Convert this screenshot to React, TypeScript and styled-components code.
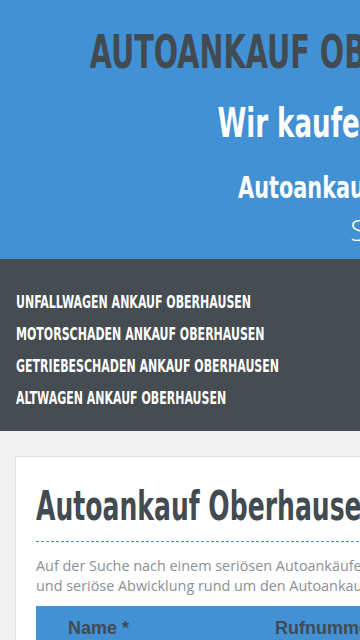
import styled, { createGlobalStyle } from "styled-components";

const GlobalStyle = createGlobalStyle`
  * {
    box-sizing: border-box;
  }

  html,
  body {
    margin: 0;
    padding: 0;
    background-color: #f1f1f1;
  }

  body {
    font-family: "Open Sans", "Liberation Sans", sans-serif;
  }
`;

const Page = styled.div`
  width: 770px;
  background-color: #f1f1f1;
  padding-bottom: 40px;
`;

const Header = styled.header`
  display: flex;
  flex-direction: column;
  align-items: center;

  height: 259px;
  padding-top: 22px;

  text-align: center;
  background-color: #4291d5;
`;

// schmale Überschrift-Schrift (Oswald-Ersatz)
const Narrow = styled.span<{ $scale: number; $origin?: string }>`
  display: inline-block;
  white-space: nowrap;

  font-family: "Liberation Sans Narrow", "DejaVu Sans Condensed", sans-serif;
  font-weight: 700;

  transform: scaleX(${({ $scale }) => $scale});
  transform-origin: ${({ $origin }) => $origin ?? "center"};
`;

const SiteTitle = styled.h1`
  margin: 0;
  color: #434b52;
  font-size: 46px;
  line-height: 56px;
  font-weight: 700;
`;

const Slogan = styled.h2`
  margin: 18px 0 0;
  color: #ffffff;
  font-size: 40px;
  line-height: 48px;
  font-weight: 700;
`;

const SubSlogan = styled.h3`
  margin: 20px 0 0;
  color: #ffffff;
  font-size: 31px;
  line-height: 38px;
  font-weight: 700;
`;

const Claim = styled.p`
  margin: 6px 0 0;
  color: #ffffff;
  font-family: "Open Sans", sans-serif;
  font-size: 30px;
  font-weight: 300;
  line-height: 36px;
  white-space: nowrap;
`;

const Nav = styled.nav`
  height: 172px;
  padding: 26px 16px 0;
  background-color: #454c52;
`;

const NavList = styled.ul`
  display: flex;
  flex-direction: column;
  margin: 0;
  padding: 0;
  list-style: none;
`;

const NavItem = styled.li`
  height: 32px;
  line-height: 32px;
`;

const NavLink = styled.a`
  color: #ffffff;
  font-size: 18px;
  text-decoration: none;
`;

const Main = styled.main`
  padding: 25px 15px 0;
`;

const Card = styled.section`
  padding: 22px 20px 40px;
  border: 1px solid #e2e2e2;
  background-color: #ffffff;
`;

const CardTitle = styled.h2`
  margin: 0;
  padding-bottom: 10px;
  border-bottom: 1px dashed #4291d5;

  color: #434b52;
  font-size: 41px;
  line-height: 50px;
`;

const Intro = styled.p`
  margin: 14px 0 0;
  color: #8a9096;
  font-size: 14.4px;
  line-height: 20px;
  white-space: nowrap;
`;

const FormTable = styled.div`
  display: grid;
  grid-template-columns: 207px 207px 1fr;
  margin-top: 10px;
  background-color: #4291d5;
`;

const HeadCell = styled.div`
  padding: 11px 0 10px 32px;
  color: #434b52;
  font-family: "Liberation Sans", Arial, sans-serif;
  font-size: 18px;
  font-weight: 700;
  line-height: 22px;
`;

const navItems = [
  "UNFALLWAGEN ANKAUF OBERHAUSEN",
  "MOTORSCHADEN ANKAUF OBERHAUSEN",
  "GETRIEBESCHADEN ANKAUF OBERHAUSEN",
  "ALTWAGEN ANKAUF OBERHAUSEN",
];

export default function App() {
  return (
    <Page>
      <GlobalStyle />
      <Header>
        <SiteTitle>
          <Narrow $scale={0.693}>AUTOANKAUF OBERHAUSEN &amp; MEHR</Narrow>
        </SiteTitle>
        <Slogan>
          <Narrow $scale={0.725}>Wir kaufen Ihr Auto an</Narrow>
        </Slogan>
        <SubSlogan>
          <Narrow $scale={0.746}>Autoankauf Oberhausen!</Narrow>
        </SubSlogan>
        <Claim>Sehr!</Claim>
      </Header>

      <Nav>
        <NavList>
          {navItems.map((item) => (
            <NavItem key={item}>
              <NavLink href="#">
                <Narrow $scale={0.68} $origin="left">
                  {item}
                </Narrow>
              </NavLink>
            </NavItem>
          ))}
        </NavList>
      </Nav>

      <Main>
        <Card>
          <CardTitle>
            <Narrow $scale={0.68} $origin="left">
              Autoankauf Oberhausen
            </Narrow>
          </CardTitle>
          <Intro>
            Auf der Suche nach einem seriösen Autoankäufer in Oberhausen? Wir bieten Ihnen eine schnelle
            <br />
            und seriöse Abwicklung rund um den Autoankauf in Oberhausen und Umgebung.
          </Intro>
          <FormTable>
            <HeadCell>Name *</HeadCell>
            <HeadCell>Rufnummer *</HeadCell>
            <HeadCell>E-Mail</HeadCell>
          </FormTable>
        </Card>
      </Main>
    </Page>
  );
}
